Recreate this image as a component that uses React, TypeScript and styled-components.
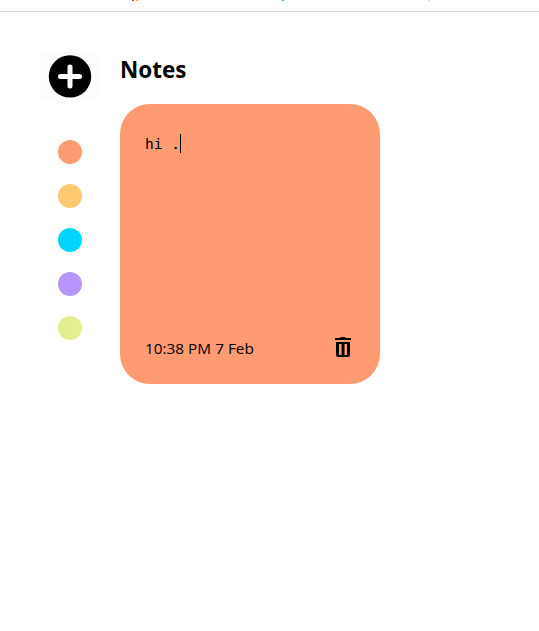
import React from 'react';
import styled, { createGlobalStyle } from 'styled-components';

const GlobalStyle = createGlobalStyle`
  * { box-sizing: border-box; }
  body { margin: 0; background: #fff; color: #000; font-family: "Noto Sans", "Open Sans", sans-serif; overflow: hidden; }
`;

const Page = styled.div`
  height: 631px;
  display: flex;
  flex-direction: column;
`;
const TopBar = styled.header`
  height: 12px;
  flex: none;
  border-bottom: 1px solid #dadbdc;
`;
const BarMarks = styled.svg`
  display: block;
  width: 100%;
  height: 2px;
`;
const Content = styled.div`
  display: flex;
  padding-top: 40px;
`;
const Sidebar = styled.aside`
  width: 120px;
  display: flex;
  flex-direction: column;
  align-items: center;
  padding-right: 20px;
  padding-left: 40px;
`;
const AddButton = styled.button`
  width: 58px;
  height: 48px;
  padding: 0;
  border: 0;
  background: #fdfdfd;
  display: flex;
  align-items: center;
  justify-content: center;
`;
const Swatches = styled.ul`
  list-style: none;
  margin: 40px 0 0;
  padding: 0;
  display: flex;
  flex-direction: column;
  gap: 20px;
`;
const Swatch = styled.li<{ $color: string }>`
  width: 24px;
  height: 24px;
  border-radius: 50%;
  background: ${(p) => p.$color};
`;
const Main = styled.main`
  width: 260px;
`;
const Title = styled.h2`
  margin: 0;
  height: 52px;
  font-size: 22.4px;
  line-height: 35px;
  font-weight: 700;
`;
const NoteCard = styled.article`
  width: 260px;
  height: 280px;
  border-radius: 30px;
  background: #ff9b73;
  padding: 25px;
  display: flex;
  flex-direction: column;
  justify-content: space-between;
`;
const NoteText = styled.div`
  display: flex;
  align-items: center;
  height: 29px;
  font: 14.6px/20px "DejaVu Sans Mono", monospace;
  white-space: pre;
`;
const Caret = styled.span`
  width: 1px;
  height: 19px;
  background: #000;
`;
const NoteFooter = styled.footer`
  display: flex;
  align-items: center;
  justify-content: space-between;
  height: 24px;
  font-family: "Open Sans", "Noto Sans", sans-serif;
  font-size: 15.35px;
  line-height: 24px;
`;
const NoteDate = styled.time`
  padding-top: 2px;
`;

const colors = ['#ff9b73', '#fec971', '#00d4fe', '#b693fd', '#e4ee91'];

export default function App() {
  return (
    <Page>
      <GlobalStyle />
      <TopBar>
        <BarMarks viewBox="0 0 539 2" preserveAspectRatio="none">
          <path d="M132 0h2v1h-2z" fill="#ef2f72" />
          <path d="M136 0h2v1h-2z" fill="#f2b632" />
          <path d="M282 0h2v1h-2z" fill="#36c08b" />
          <path d="M428 0h2v1h-2z" fill="#b9e0ea" />
        </BarMarks>
      </TopBar>
      <Content>
        <Sidebar>
          <AddButton aria-label="Add note">
            <svg width="44" height="44" viewBox="0 0 44 44">
              <circle cx="22" cy="22.4" r="21.2" />
              <path d="M22 13v19M12.500 22.500h19" stroke="#fff" strokeWidth="5" strokeLinecap="round" />
            </svg>
          </AddButton>
          <Swatches>
            {colors.map((color) => <Swatch key={color} $color={color} />)}
          </Swatches>
        </Sidebar>
        <Main>
          <Title>Notes</Title>
          <NoteCard>
            <NoteText>hi .<Caret /></NoteText>
            <NoteFooter>
              <NoteDate>10:38 PM 7 Feb</NoteDate>
              <svg width="24" height="24" viewBox="0 0 24 24">
                <path d="M9.500 2h5v1H20v2H4V3h5.500zM5 7h14v13q0 2-2 2H7q-2 0-2-2zM8 9v11h2.500V9zm5.500 0v11H16V9z" fillRule="evenodd" />
              </svg>
            </NoteFooter>
          </NoteCard>
        </Main>
      </Content>
    </Page>
  );
}
